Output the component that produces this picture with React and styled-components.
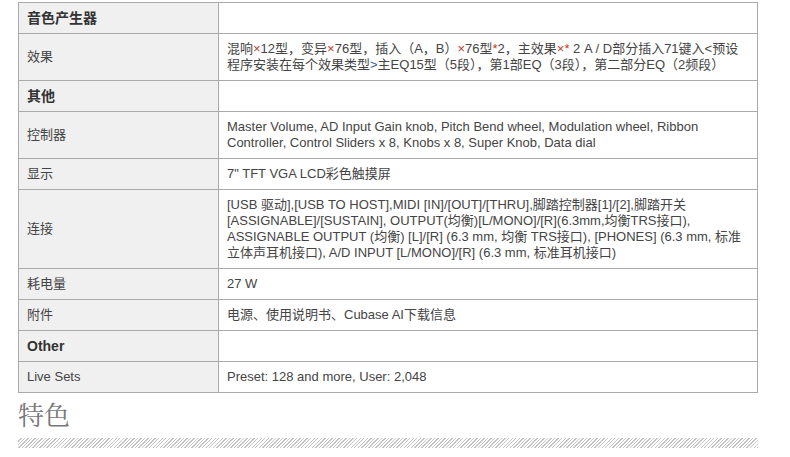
import React from "react";
import styled, { createGlobalStyle } from "styled-components";

const GlobalStyle = createGlobalStyle`
  body {
    margin: 0;
    background: #fff;
    font-family: "Liberation Sans", Arial, "Noto Sans CJK SC", sans-serif;
    color: #444;
  }
`;

const Red = styled.span`
  color: #c0392b;
`;

const Blue = styled.span`
  color: #3a5ba0;
`;

const Page = styled.div`
  width: 740px;
  padding: 2px 0 0 18px;
`;

const SpecTable = styled.table`
  width: 740px;
  border-collapse: collapse;
  font-size: 13px;
  line-height: 16px;
  td {
    border: 1px solid #aaa;
    padding: 7px 8px;
    vertical-align: middle;
  }
`;

const Head = styled.td`
  width: 183px;
  background: #f0f0f0;
  font-size: ${(p) => (p.$group ? "14px" : "13px")};
  font-weight: ${(p) => (p.$group ? "bold" : "normal")};
  color: ${(p) => (p.$group ? "#333" : "#444")};
`;

const Cell = styled.td`
  background: #fff;
`;

const Heading = styled.h2`
  margin: 9px 0 0;
  font-family: "Liberation Serif", "Noto Serif CJK SC", "Noto Sans CJK SC", serif;
  font-size: 26px;
  line-height: 30px;
  font-weight: normal;
  color: #777;
`;

const Hatch = styled.div`
  margin-top: 6px;
  height: 10px;
  background: repeating-linear-gradient(
    -45deg,
    #c4c4c4 0px,
    #c4c4c4 1px,
    #fff 1px,
    #fff 2.5px
  );
`;

const specs = [
  { title: "音色产生器", group: true },
  {
    label: "效果",
    value: (
      <>
        混响<Red>×</Red>12型，变异<Red>×</Red>76型，插入（A，B）<Red>×</Red>76型<Red>*</Red>2，主效果
        <Red>×*</Red> 2 A / D部分插入71键入&lt;预设程序安装在每个效果类型<Blue>&gt;</Blue>主EQ15型（5段），第1部EQ（3段），第二部分EQ（2频段）
      </>
    ),
  },
  { title: "其他", group: true },
  {
    label: "控制器",
    value:
      "Master Volume, AD Input Gain knob, Pitch Bend wheel, Modulation wheel, Ribbon Controller, Control Sliders x 8, Knobs x 8, Super Knob, Data dial",
  },
  { label: "显示", value: "7\" TFT VGA LCD彩色触摸屏" },
  {
    label: "连接",
    value:
      "[USB 驱动],[USB TO HOST],MIDI [IN]/[OUT]/[THRU],脚踏控制器[1]/[2],脚踏开关 [ASSIGNABLE]/[SUSTAIN], OUTPUT(均衡)[L/MONO]/[R](6.3mm,均衡TRS接口), ASSIGNABLE OUTPUT (均衡) [L]/[R] (6.3 mm, 均衡 TRS接口), [PHONES] (6.3 mm, 标准立体声耳机接口), A/D INPUT [L/MONO]/[R] (6.3 mm, 标准耳机接口)",
  },
  { label: "耗电量", value: "27 W" },
  { label: "附件", value: "电源、使用说明书、Cubase AI下载信息" },
  { title: "Other", group: true },
  { label: "Live Sets", value: "Preset: 128 and more, User: 2,048" },
];

const App = () => (
  <Page>
    <GlobalStyle />
    <SpecTable>
      <tbody>
        {specs.map((row, i) =>
          row.group ? (
            <tr key={i}>
              <Head $group>{row.title}</Head>
              <Cell />
            </tr>
          ) : (
            <tr key={i}>
              <Head>{row.label}</Head>
              <Cell>{row.value}</Cell>
            </tr>
          )
        )}
      </tbody>
    </SpecTable>
    <Heading>特色</Heading>
    <Hatch />
  </Page>
);

export default App;
